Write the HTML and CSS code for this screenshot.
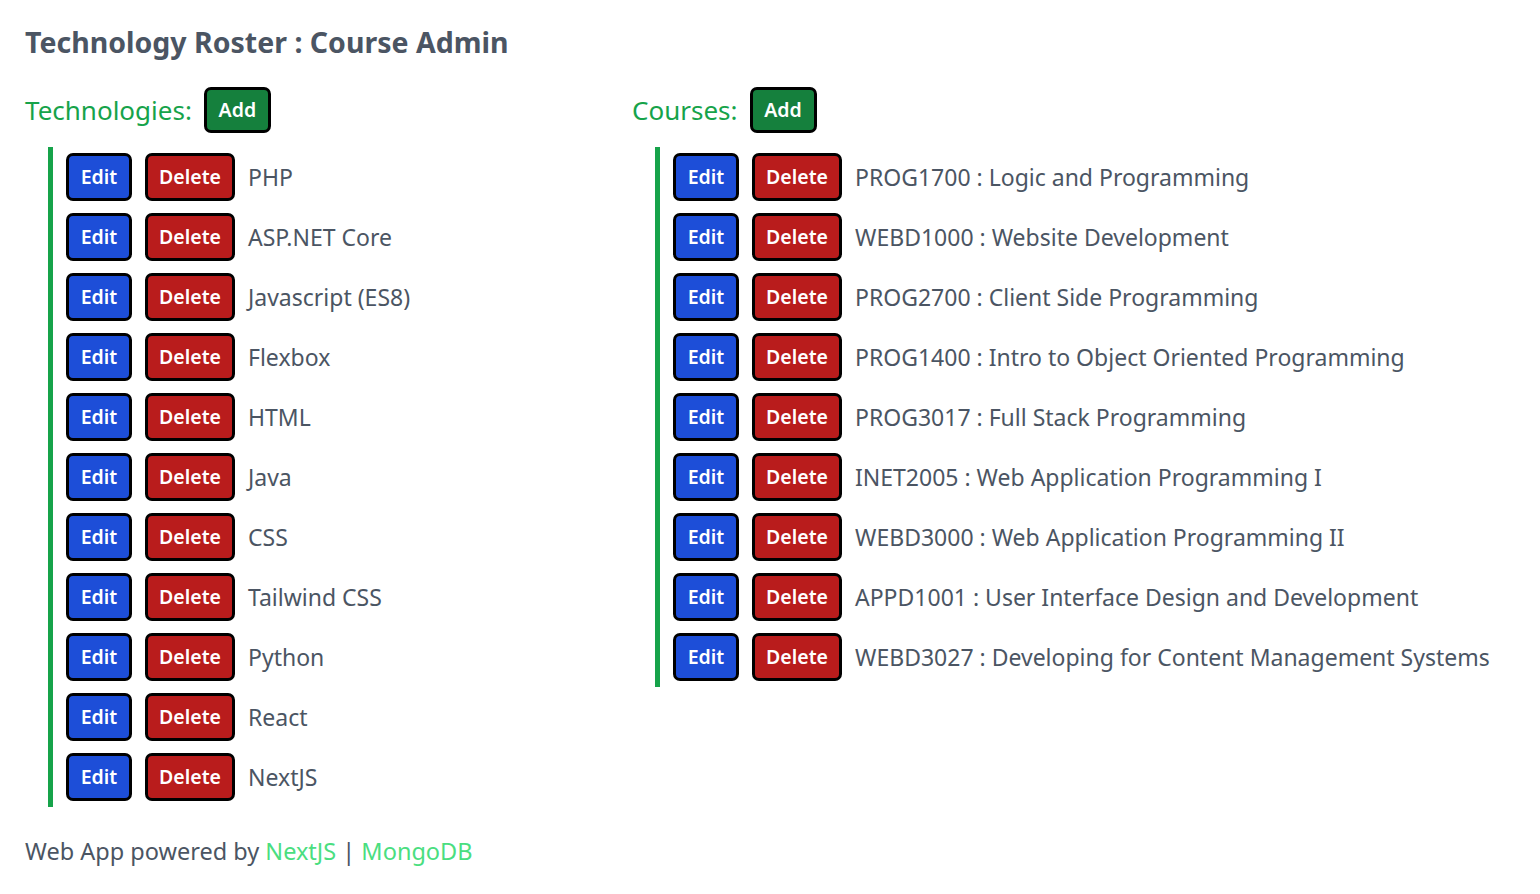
FILE: index.html
```html
<!DOCTYPE html>
<html lang="en">
<head>
<meta charset="utf-8">
<title>Technology Roster : Course Admin</title>
<link rel="stylesheet" href="styles.css">
</head>
<body>
<main class="page">
  <h1 class="title">Technology Roster : Course Admin</h1>
  <div class="columns">
    <section class="panel panel-tech">
      <div class="panel-head">
        <h2 class="panel-title">Technologies:</h2>
        <button class="btn btn-add">Add</button>
      </div>
      <ul class="list">
        <li class="row"><button class="btn btn-edit">Edit</button><button class="btn btn-delete">Delete</button><span class="label">PHP</span></li>
        <li class="row"><button class="btn btn-edit">Edit</button><button class="btn btn-delete">Delete</button><span class="label">ASP.NET Core</span></li>
        <li class="row"><button class="btn btn-edit">Edit</button><button class="btn btn-delete">Delete</button><span class="label">Javascript (ES8)</span></li>
        <li class="row"><button class="btn btn-edit">Edit</button><button class="btn btn-delete">Delete</button><span class="label">Flexbox</span></li>
        <li class="row"><button class="btn btn-edit">Edit</button><button class="btn btn-delete">Delete</button><span class="label">HTML</span></li>
        <li class="row"><button class="btn btn-edit">Edit</button><button class="btn btn-delete">Delete</button><span class="label">Java</span></li>
        <li class="row"><button class="btn btn-edit">Edit</button><button class="btn btn-delete">Delete</button><span class="label">CSS</span></li>
        <li class="row"><button class="btn btn-edit">Edit</button><button class="btn btn-delete">Delete</button><span class="label">Tailwind CSS</span></li>
        <li class="row"><button class="btn btn-edit">Edit</button><button class="btn btn-delete">Delete</button><span class="label">Python</span></li>
        <li class="row"><button class="btn btn-edit">Edit</button><button class="btn btn-delete">Delete</button><span class="label">React</span></li>
        <li class="row"><button class="btn btn-edit">Edit</button><button class="btn btn-delete">Delete</button><span class="label">NextJS</span></li>
      </ul>
    </section>
    <section class="panel panel-courses">
      <div class="panel-head">
        <h2 class="panel-title">Courses:</h2>
        <button class="btn btn-add">Add</button>
      </div>
      <ul class="list">
        <li class="row"><button class="btn btn-edit">Edit</button><button class="btn btn-delete">Delete</button><span class="label">PROG1700 : Logic and Programming</span></li>
        <li class="row"><button class="btn btn-edit">Edit</button><button class="btn btn-delete">Delete</button><span class="label">WEBD1000 : Website Development</span></li>
        <li class="row"><button class="btn btn-edit">Edit</button><button class="btn btn-delete">Delete</button><span class="label">PROG2700 : Client Side Programming</span></li>
        <li class="row"><button class="btn btn-edit">Edit</button><button class="btn btn-delete">Delete</button><span class="label">PROG1400 : Intro to Object Oriented Programming</span></li>
        <li class="row"><button class="btn btn-edit">Edit</button><button class="btn btn-delete">Delete</button><span class="label">PROG3017 : Full Stack Programming</span></li>
        <li class="row"><button class="btn btn-edit">Edit</button><button class="btn btn-delete">Delete</button><span class="label">INET2005 : Web Application Programming I</span></li>
        <li class="row"><button class="btn btn-edit">Edit</button><button class="btn btn-delete">Delete</button><span class="label">WEBD3000 : Web Application Programming II</span></li>
        <li class="row"><button class="btn btn-edit">Edit</button><button class="btn btn-delete">Delete</button><span class="label">APPD1001 : User Interface Design and Development</span></li>
        <li class="row"><button class="btn btn-edit">Edit</button><button class="btn btn-delete">Delete</button><span class="label">WEBD3027 : Developing for Content Management Systems</span></li>
      </ul>
    </section>
  </div>
  <footer class="footer">Web App powered by <a class="footer-link" href="#">NextJS</a> | <a class="footer-link" href="#">MongoDB</a></footer>
</main>
</body>
</html>
```

FILE: styles.css
```css
* { box-sizing: border-box; }
html, body { margin: 0; padding: 0; background: #ffffff; }
body {
  font-family: "Noto Sans", "Open Sans", sans-serif;
  color: #4b5563;
}
.page { padding: 24px 24px 0 25px; }
.title {
  margin: 0;
  font-size: 28.5px;
  line-height: 36px;
  font-weight: 700;
  color: #4b5563;
}
.columns {
  display: grid;
  grid-template-columns: 607px 1fr;
  margin-top: 27px;
}
.panel-head {
  display: flex;
  align-items: center;
  gap: 12px;
  height: 46px;
}
.panel-title {
  margin: 0;
  font-size: 26px;
  line-height: 32px;
  font-weight: 400;
  color: #16a34a;
}
.list {
  list-style: none;
  margin: 14px 0 0 23px;
  padding: 0 0 0 13px;
  border-left: 5px solid #16a34a;
}
.row {
  display: flex;
  align-items: center;
  gap: 13px;
  padding: 6px 0;
  white-space: nowrap;
}
.btn {
  font-family: inherit;
  font-size: 19.5px;
  font-weight: 600;
  line-height: 26px;
  color: #ffffff;
  border: 3px solid #000000;
  border-radius: 7px;
  height: 48px;
  padding: 0 12px;
  cursor: pointer;
}
.btn-add { background: #15803d; height: 46px; width: 67px; padding: 0; }
.btn-edit { background: #1d4ed8; width: 66px; padding: 0; }
.btn-delete { background: #b91c1c; width: 90px; padding: 0; }
.label {
  font-size: 23px;
  line-height: 32px;
  color: #4b5563;
}
.footer {
  margin-top: 28px;
  font-size: 23.5px;
  line-height: 32px;
  color: #4b5563;
}
.footer-link { color: #4ade80; text-decoration: none; }
```
